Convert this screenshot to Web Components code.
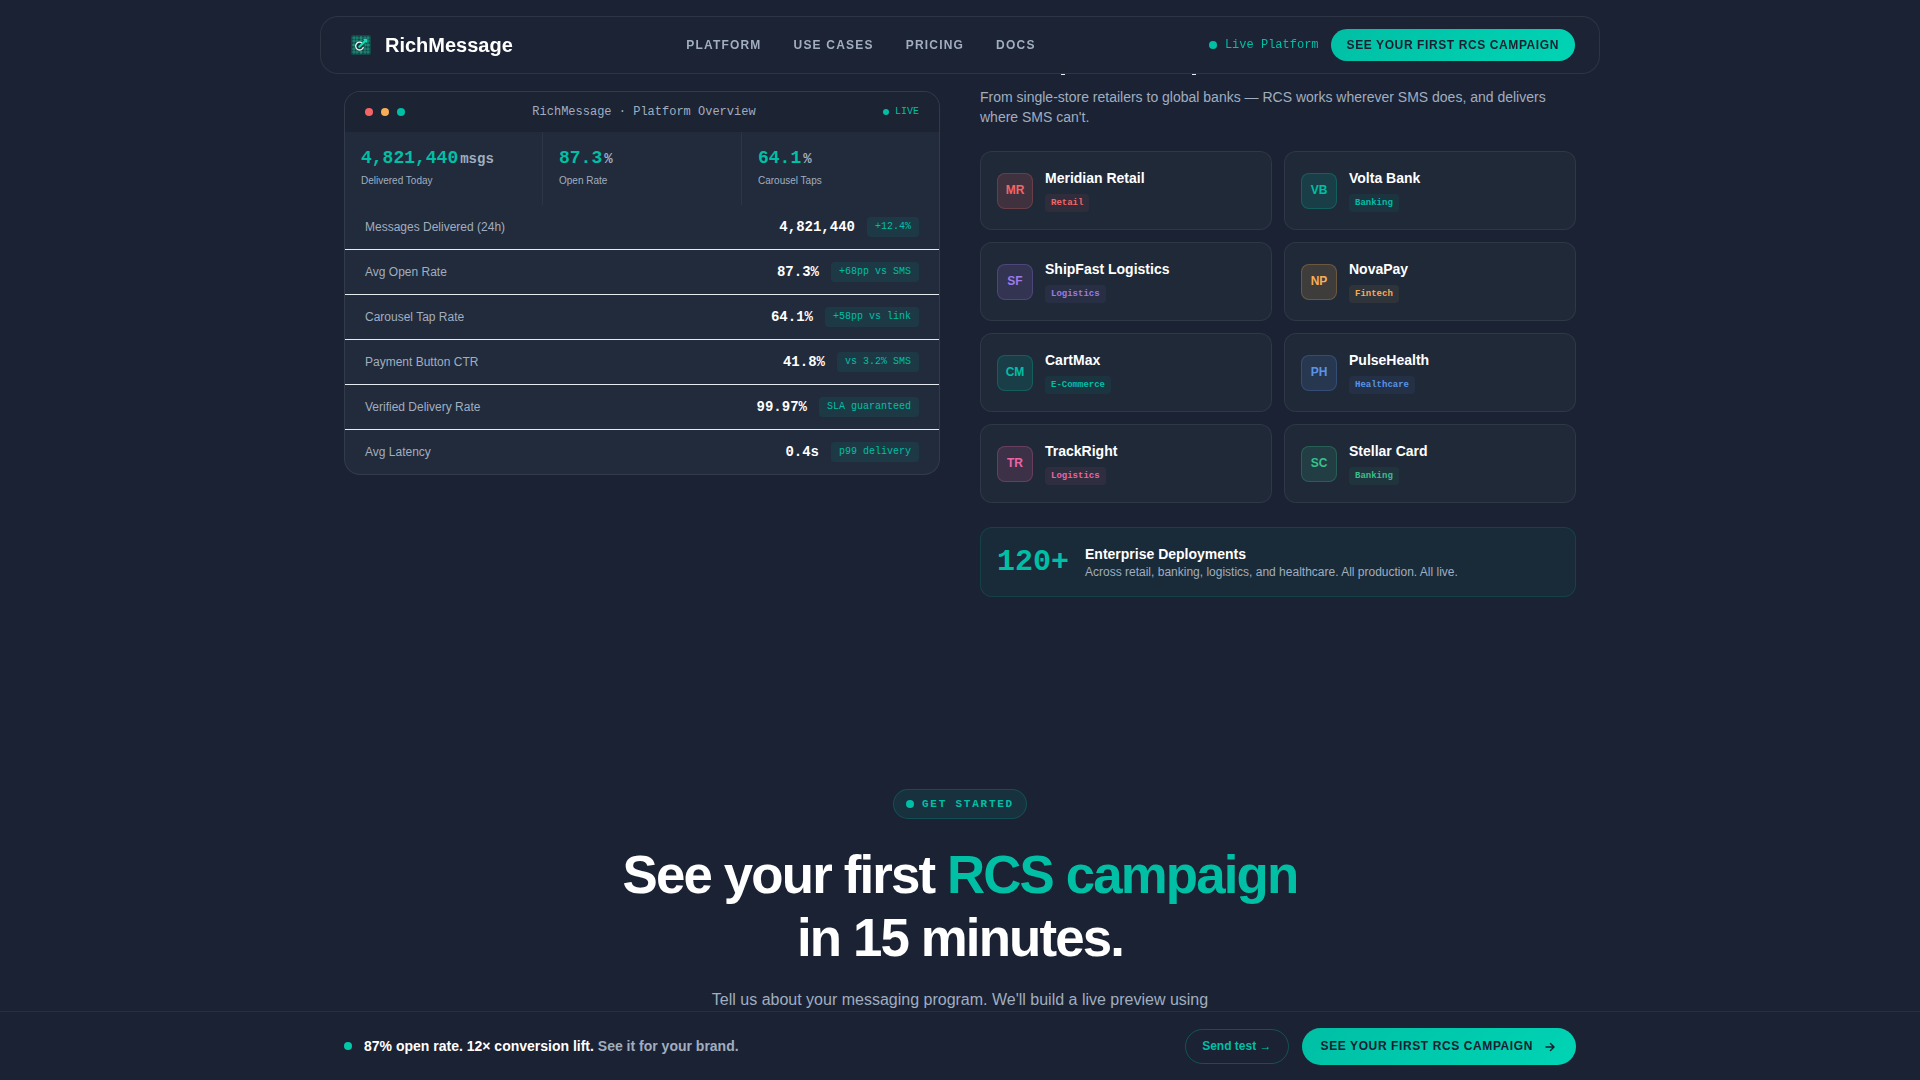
<!DOCTYPE html>
<html lang="en">
<head>
<meta charset="utf-8">
<title>RichMessage</title>
<style>
html,body{margin:0;padding:0;height:100%;}
body{background:#1b2233;color:#fff;font-family:"Liberation Sans",Arial,sans-serif;font-size:16px;line-height:1.6;overflow:hidden;height:1080px;}
</style>
</head>
<body>
<rm-nav></rm-nav>
<rm-proof>
  <rm-dashboard slot="left">
    <rm-stat value="4,821,440" unit="msgs" label="Delivered Today"></rm-stat>
    <rm-stat value="87.3" unit="%" label="Open Rate"></rm-stat>
    <rm-stat value="64.1" unit="%" label="Carousel Taps"></rm-stat>
    <rm-row slot="rows" label="Messages Delivered (24h)" value="4,821,440" chip="+12.4%"></rm-row>
    <rm-row slot="rows" label="Avg Open Rate" value="87.3%" chip="+68pp vs SMS"></rm-row>
    <rm-row slot="rows" label="Carousel Tap Rate" value="64.1%" chip="+58pp vs link"></rm-row>
    <rm-row slot="rows" label="Payment Button CTR" value="41.8%" chip="vs 3.2% SMS"></rm-row>
    <rm-row slot="rows" label="Verified Delivery Rate" value="99.97%" chip="SLA guaranteed"></rm-row>
    <rm-row slot="rows" label="Avg Latency" value="0.4s" chip="p99 delivery" last></rm-row>
  </rm-dashboard>
  <rm-client code="MR" name="Meridian Retail" tag="Retail" rgb="245,101,101" text="#f56565"></rm-client>
  <rm-client code="VB" name="Volta Bank" tag="Banking" rgb="0,191,165" text="#00bfa5"></rm-client>
  <rm-client code="SF" name="ShipFast Logistics" tag="Logistics" rgb="159,122,234" text="#9f7aea"></rm-client>
  <rm-client code="NP" name="NovaPay" tag="Fintech" rgb="246,173,85" text="#f6ad55"></rm-client>
  <rm-client code="CM" name="CartMax" tag="E-Commerce" rgb="0,191,165" text="#00bfa5"></rm-client>
  <rm-client code="PH" name="PulseHealth" tag="Healthcare" rgb="90,143,224" text="#5a94e6"></rm-client>
  <rm-client code="TR" name="TrackRight" tag="Logistics" rgb="237,100,166" text="#ed64a6"></rm-client>
  <rm-client code="SC" name="Stellar Card" tag="Banking" rgb="56,190,140" text="#38c08c"></rm-client>
</rm-proof>
<rm-cta></rm-cta>
<rm-sticky></rm-sticky>

<template id="t-nav">
<style>
:host{display:flex;position:fixed;top:16px;left:320px;width:1280px;box-sizing:border-box;height:58px;z-index:10;align-items:center;justify-content:space-between;padding:0 24px 0 30px;background:#1c2334;border:1px solid rgba(255,255,255,.08);border-radius:18px;}
.logo{display:flex;align-items:center;gap:14px;font-size:20px;font-weight:700;color:#fff;line-height:32px;}
svg{display:block;}
.links{display:flex;gap:32px;font-size:12px;font-weight:700;letter-spacing:1.2px;color:#a0aec0;line-height:20px;}
.right{display:flex;align-items:center;gap:12px;}
.live{display:flex;align-items:center;gap:8px;font:12px/19px "Liberation Mono",monospace;color:#00bfa5;}
.dot{width:8px;height:8px;border-radius:50%;background:#00bfa5;}
.btn{display:block;height:32px;line-height:32px;padding:0 16px;border-radius:16px;background:linear-gradient(135deg,#00bfa5,#00d4b4);color:#1a2030;font-size:12px;font-weight:700;letter-spacing:.6px;white-space:nowrap;}
</style>
<div class="logo">
<svg width="20" height="20" viewBox="0 0 20 20" aria-hidden="true">
<rect width="20" height="20" rx="2" fill="#124846"/>
<g stroke="#25b39c" stroke-width=".7" stroke-opacity=".8" fill="none">
<path d="M1 3h18M1 6h18M1 14h18M1 17h18M3 1v18M6 1v18M14 1v18M17 1v18"/>
<path d="M10 1v5M1 10h5M10 14v5M14 10h5" stroke="#3fe0c4"/>
</g>
<path d="M11.2 8.2A3.9 3.9 0 1 0 12.2 12.5" fill="#17363c" stroke="#eef6f4" stroke-width="1.3" stroke-linecap="round"/>
<path d="M8.3 11.8L15 5.3" stroke="#16dcb6" stroke-width="2.1" stroke-linecap="round"/>
<path d="M12 4h4.2v4.2z" fill="#16dcb6"/>
</svg>
<span>RichMessage</span>
</div>
<div class="links"><span>PLATFORM</span><span>USE CASES</span><span>PRICING</span><span>DOCS</span></div>
<div class="right">
<div class="live"><i class="dot"></i><span>Live Platform</span></div>
<span class="btn">SEE YOUR FIRST RCS CAMPAIGN</span>
</div>
</template>

<template id="t-proof">
<style>
:host{display:grid;grid-template-columns:596px 596px;gap:40px;width:1232px;margin:0 auto;padding:35px 0 0;align-items:start;}
.l{display:block;margin-top:56px;}
.marks{display:flex;align-items:flex-start;box-sizing:border-box;height:52px;padding-top:39px;}
.marks i{display:block;width:4px;height:1px;background:#e8ecf2;margin-left:81px;}
.marks i+i{margin-left:127px;}
p{margin:0 0 24px;font-size:14px;line-height:20px;color:#a0aec0;}
.grid{display:grid;grid-template-columns:292px 292px;gap:12px;}
.bar{display:flex;align-items:center;gap:16px;margin-top:24px;height:70px;box-sizing:border-box;padding:0 16px;border:1px solid rgba(0,191,165,.16);border-radius:12px;background:rgba(0,191,165,.05);}
.num{font:700 30px/36px "Liberation Mono",monospace;color:#00bfa5;}
.txt{padding-top:2px;}
.t{font-size:14px;font-weight:700;line-height:17px;color:#fff;}
.s{font-size:12px;line-height:18px;color:#a0aec0;}
</style>
<div class="l"><slot name="left"></slot></div>
<div>
<div class="marks" aria-hidden="true"><i></i><i></i></div>
<p>From single-store retailers to global banks — RCS works wherever SMS does, and delivers where SMS can't.</p>
<div class="grid"><slot></slot></div>
<div class="bar"><div class="num">120+</div><div class="txt"><div class="t">Enterprise Deployments</div><div class="s">Across retail, banking, logistics, and healthcare. All production. All live.</div></div></div>
</div>
</template>

<template id="t-dash">
<style>
:host{display:block;background:#212b3b;border:1px solid rgba(255,255,255,.08);border-radius:16px;overflow:hidden;}
.head{display:flex;align-items:center;justify-content:space-between;height:40px;padding:0 20px;background:#1c2333;}
.dots{display:flex;gap:8px;}
.dots i{width:8px;height:8px;border-radius:50%;}
.title{font:12px/19px "Liberation Mono",monospace;color:#a0aec0;}
.live{display:flex;align-items:center;gap:6px;font:10px/16px "Liberation Mono",monospace;color:#00bfa5;}
.live i{width:6px;height:6px;border-radius:50%;background:#00bfa5;}
.stats{display:grid;grid-template-columns:198px 199px 197px;height:73px;}
</style>
<div class="head">
<div class="dots"><i style="background:#f56565"></i><i style="background:#f6ad55"></i><i style="background:#00bfa5"></i></div>
<div class="title">RichMessage · Platform Overview</div>
<div class="live"><i></i><span>LIVE</span></div>
</div>
<div class="stats"><slot></slot></div>
<slot name="rows"></slot>
</template>

<template id="t-stat">
<style>
:host{display:block;padding:15px 16px 0;border-right:1px solid rgba(255,255,255,.05);}
:host(:nth-of-type(3)){border-right:0;}
.v{font:700 18px/22px "Liberation Mono",monospace;color:#00bfa5;white-space:nowrap;}
.u{font-size:14px;color:#a0aec0;margin-left:2px;}
.l{margin-top:3px;font-size:10px;line-height:16px;color:#a0aec0;}
</style>
<div class="v"><span id="v"></span><span class="u" id="u"></span></div>
<div class="l" id="l"></div>
</template>

<template id="t-row">
<style>
:host{display:flex;align-items:center;justify-content:space-between;box-sizing:border-box;height:45px;padding:0 20px;border-bottom:1px solid #e6ebf0;}
:host([last]){border-bottom:0;height:44px;}
.l{font-size:12px;line-height:19px;color:#a0aec0;}
.r{display:flex;align-items:center;gap:12px;}
.v{font:700 14px/22px "Liberation Mono",monospace;color:#fff;}
.c{font:10px/16px "Liberation Mono",monospace;color:#00bfa5;padding:2px 8px;border-radius:4px;background:rgba(0,191,165,.1);}
</style>
<span class="l" id="l"></span>
<span class="r"><span class="v" id="v"></span><span class="c" id="c"></span></span>
</template>

<template id="t-client">
<style>
:host{display:flex;align-items:center;gap:12px;box-sizing:border-box;height:79px;padding:0 16px;background:#1f2938;border:1px solid rgba(255,255,255,.07);border-radius:12px;}
.a{flex:none;display:flex;align-items:center;justify-content:center;box-sizing:border-box;width:36px;height:36px;border-radius:8px;font-size:12px;font-weight:700;}
.n{font-size:14px;font-weight:700;line-height:22.4px;color:#fff;}
.t{display:inline-block;vertical-align:top;margin-top:5px;padding:2px 6px;border-radius:4px;font:700 9px/14.4px "Liberation Mono",monospace;}
</style>
<div class="a" id="a"></div>
<div><div class="n" id="n"></div><span class="t" id="t"></span></div>
</template>

<template id="t-cta">
<style>
:host{display:flex;flex-direction:column;align-items:center;margin-top:192px;text-align:center;}
.pill{display:flex;align-items:center;gap:8px;box-sizing:border-box;height:30px;padding:0 12px;border:1px solid rgba(0,191,165,.22);border-radius:15px;background:rgba(0,191,165,.1);font:700 11px/16px "Liberation Mono",monospace;letter-spacing:1.76px;color:#00bfa5;}
.pill i{width:8px;height:8px;border-radius:50%;background:#00bfa5;}
h2{margin:24px 0 0;font-size:52.8px;line-height:63.4px;font-weight:700;letter-spacing:-1.85px;color:#fff;}
h2 span{color:#00bfa5;}
p{margin:17px 0 0;font-size:16px;line-height:26px;color:#a0aec0;}
</style>
<div class="pill"><i></i><span>GET STARTED</span></div>
<h2>See your first <span>RCS campaign</span><br>in 15 minutes.</h2>
<p>Tell us about your messaging program. We'll build a live preview using</p>
</template>

<template id="t-sticky">
<style>
:host{display:block;position:fixed;left:0;right:0;bottom:0;height:69px;box-sizing:border-box;z-index:10;background:#1b2233;border-top:1px solid #243142;}
.in{display:flex;align-items:center;justify-content:space-between;width:1232px;height:100%;margin:0 auto;}
.msg{display:flex;align-items:center;gap:12px;font-size:14px;font-weight:700;line-height:22px;color:#fff;}
.msg i{width:8px;height:8px;border-radius:50%;background:#00c9a7;}
.msg em{font-style:normal;color:#a0aec0;}
.acts{display:flex;align-items:center;gap:13px;}
.ghost{display:block;box-sizing:border-box;height:35px;line-height:33px;padding:0 16px;border:1px solid rgba(0,191,165,.3);border-radius:18px;font-size:12px;font-weight:700;color:#00bfa5;white-space:nowrap;}
.main{display:flex;align-items:center;gap:12px;box-sizing:border-box;height:37px;padding:1px 21px 0 19px;border-radius:19px;background:linear-gradient(135deg,#00bfa5,#00d4b4);font-size:12px;font-weight:700;letter-spacing:.6px;color:#1a2030;white-space:nowrap;}
svg{display:block;}
</style>
<div class="in">
<div class="msg"><i></i><span>87% open rate. 12× conversion lift. <em>See it for your brand.</em></span></div>
<div class="acts">
<span class="ghost">Send test →</span>
<span class="main"><span>SEE YOUR FIRST RCS CAMPAIGN</span>
<svg width="10" height="10" viewBox="0 0 10 10" fill="none" stroke="#1a2030" stroke-width="1.5" stroke-linecap="round" stroke-linejoin="round"><path d="M1 5h8M5.5 1.5L9 5L5.5 8.5"/></svg></span>
</div>
</div>
</template>

<script>
function mount(el,id){const r=el.attachShadow({mode:"open"});r.appendChild(document.getElementById(id).content.cloneNode(true));return r;}
function simple(tag,id,fill){customElements.define(tag,class extends HTMLElement{constructor(){super();this._r=mount(this,id);}connectedCallback(){if(fill)fill(this,this._r);}});}
simple("rm-nav","t-nav");
simple("rm-proof","t-proof");
simple("rm-dashboard","t-dash");
simple("rm-cta","t-cta");
simple("rm-sticky","t-sticky");
simple("rm-stat","t-stat",(e,r)=>{r.getElementById("v").textContent=e.getAttribute("value");r.getElementById("u").textContent=e.getAttribute("unit");r.getElementById("l").textContent=e.getAttribute("label");});
simple("rm-row","t-row",(e,r)=>{r.getElementById("l").textContent=e.getAttribute("label");r.getElementById("v").textContent=e.getAttribute("value");r.getElementById("c").textContent=e.getAttribute("chip");});
simple("rm-client","t-client",(e,r)=>{
const rgb=e.getAttribute("rgb"),c=e.getAttribute("text");
const a=r.getElementById("a"),t=r.getElementById("t");
a.textContent=e.getAttribute("code");a.style.cssText=`color:${c};background:rgba(${rgb},.15);border:1px solid rgba(${rgb},.25)`;
r.getElementById("n").textContent=e.getAttribute("name");
t.textContent=e.getAttribute("tag");t.style.cssText=`color:${c};background:rgba(${rgb},.08)`;
});
</script>
</body>
</html>
